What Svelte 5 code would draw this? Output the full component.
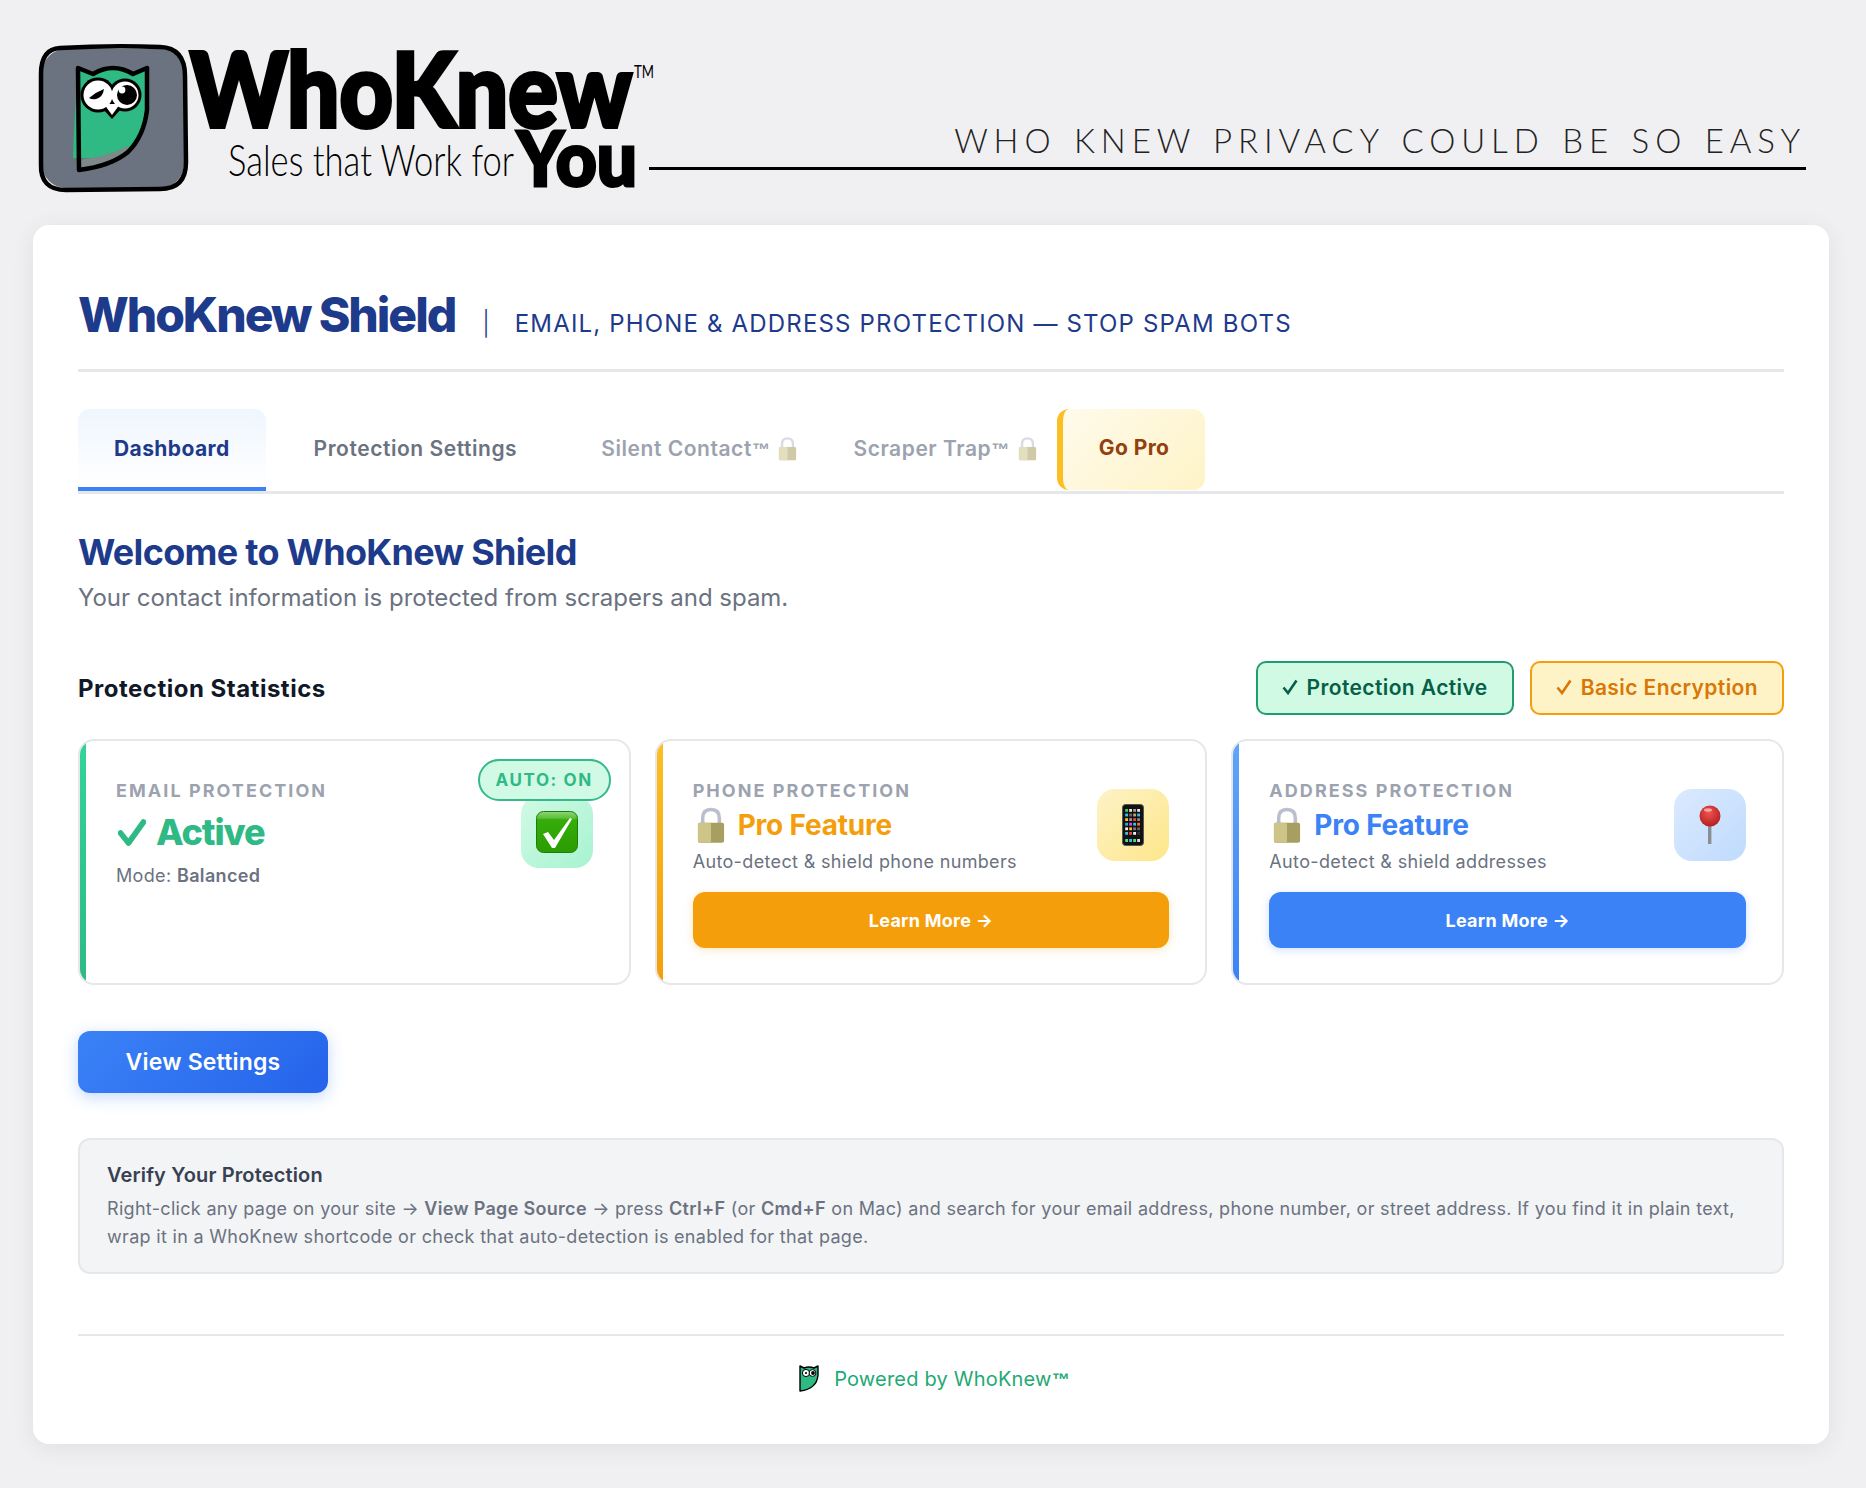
<script>
  const phoneCols = ['#3ecf5a','#e8e8e8','#9aa0a6','#e8e8e8','#38bdf8','#666','#c9a45c','#38bdf8','#fbbf24','#999','#ef4444','#888','#22b8cf','#d946ef','#38bdf8','#f97316','#eee','#fbbf24','#777','#666','#38bdf8','#ef4444','#eee','#333'];
</script>

{#snippet lock(size)}
  <svg class="emoji" width={size} height={size} viewBox="0 0 32 32" aria-hidden="true">
    <path d="M9 15 V10 Q9 3 16 3 Q23 3 23 10 V15" fill="none" stroke="#b9bfcc" stroke-width="3" />
    <rect x="5" y="14" width="22" height="17" rx="1.5" fill="#a89e62" />
    <rect x="5" y="14" width="11" height="17" rx="1.5" fill="#cdc488" />
  </svg>
{/snippet}

{#snippet tick()}
  <svg class="tick" width="16" height="16" viewBox="0 0 16 16" aria-hidden="true">
    <path d="M1.5 8.5 L6 14 L14.5 1.5" fill="none" stroke="currentColor" stroke-width="2.6" />
  </svg>
{/snippet}

<div class="page">
  <header class="brand">
    <svg class="logo" width="620" height="190" viewBox="38 10 620 190" role="img" aria-label="WhoKnew logo">
      <rect x="42" y="49" width="142" height="139" rx="24" fill="#6b7280" />
      <path d="M60 48 Q112 45 160 47 Q185 48 185 76 L186 162 Q186 189 160 189 L66 190 Q40 190 41 164 L41 74 Q41 49 60 48 Z" fill="none" stroke="#000" stroke-width="4.5" />
      <path d="M78 70 L93 74 Q103 68 113 68 Q123 68 133 74 L146 69 L146 110 Q144 134 128 150 Q108 160 73 158 Q74 120 78 70 Z" fill="#2fba84" />
      <path d="M128 146 Q108 156 80 160 L80 168 Q112 166 130 150 Z" fill="#7d8a89" />
      <path d="M78 68 L93 74 Q103 68 113 68 Q123 68 133 74 L147 68 L147 110 Q144 136 128 152 Q111 166 79 170 Z" fill="none" stroke="#000" stroke-width="4.5" stroke-linejoin="round" />
      <circle cx="98" cy="95" r="17.5" fill="#000" />
      <circle cx="125" cy="95" r="16.5" fill="#000" />
      <path d="M102 108 L112 119 L122 108 Z" fill="#000" />
      <circle cx="98" cy="95" r="14.5" fill="#fff" />
      <circle cx="125" cy="95" r="13.5" fill="#fff" />
      <path d="M104 104 L112 115 L120 104 Z" fill="#fff" />
      <circle cx="127" cy="95" r="10" fill="#000" />
      <circle cx="122" cy="90" r="3.4" fill="#fff" />
      <path d="M89 98 Q96 92 104 89 Q103 97 96 99 Q92 100 89 98 Z" fill="#000" />
      <text class="lg-big" x="190" y="127" textLength="442" lengthAdjust="spacingAndGlyphs">WhoKnew</text>
      <text class="lg-tm" x="634" y="78" textLength="20" lengthAdjust="spacingAndGlyphs">TM</text>
      <text class="lg-sales" x="228" y="176" textLength="286" lengthAdjust="spacingAndGlyphs">Sales that Work for</text>
      <text class="lg-you" x="517" y="186" textLength="120" lengthAdjust="spacingAndGlyphs">You</text>
    </svg>
    <div class="tagline">WHO KNEW PRIVACY COULD BE SO EASY</div>
  </header>

  <main class="panel">
    <div class="titlebar">
      <h1>WhoKnew Shield</h1>
      <span class="sep">|</span>
      <span class="subtitle">EMAIL, PHONE &amp; ADDRESS PROTECTION — STOP SPAM BOTS</span>
    </div>

    <nav class="tabs">
      <div class="tab current">Dashboard</div>
      <div class="tab">Protection Settings</div>
      <div class="tab locked"><span>Silent Contact<span class="tm">™</span></span><span class="tablock">{@render lock(25)}</span></div>
      <div class="tab locked"><span>Scraper Trap<span class="tm">™</span></span><span class="tablock">{@render lock(25)}</span></div>
      <div class="tab gopro">Go Pro</div>
    </nav>

    <h2>Welcome to WhoKnew Shield</h2>
    <p class="lead">Your contact information is protected from scrapers and spam.</p>

    <div class="statshead">
      <h3>Protection Statistics</h3>
      <div class="badges">
        <span class="badge green">{@render tick()} Protection Active</span>
        <span class="badge amber">{@render tick()} Basic Encryption</span>
      </div>
    </div>

    <div class="cards">
      <section class="card c-green">
        <span class="auto">AUTO: ON</span>
        <div class="cardrow first">
          <div class="info">
            <div class="label">EMAIL PROTECTION</div>
            <div class="status">
              <svg class="bigcheck" width="28" height="27" viewBox="0 0 28 27" aria-hidden="true">
                <path d="M2.5 14 L10.5 24 L25.5 3" fill="none" stroke="currentColor" stroke-width="5.6" stroke-linejoin="round" stroke-linecap="round" />
              </svg>
              Active
            </div>
            <div class="sub mode">Mode: <b>Balanced</b></div>
          </div>
          <div class="iconbox ib-green">
            <svg width="42" height="42" viewBox="0 0 42 42" aria-hidden="true">
              <defs><linearGradient id="gchk" x1="0" y1="0" x2="0" y2="1"><stop offset="0" stop-color="#8fd57a" /><stop offset=".16" stop-color="#5cc03a" /><stop offset=".2" stop-color="#36ad0a" /><stop offset="1" stop-color="#2a9c02" /></linearGradient></defs>
              <rect x=".5" y=".5" width="41" height="41" rx="7" fill="url(#gchk)" stroke="#1f7c0a" />
              <path d="M7 23 L12 21 L18 29 L34 7 L36 8 L19 37 L16 37 Z" fill="#fff" />
            </svg>
          </div>
        </div>
      </section>

      <section class="card c-amber">
        <div class="cardrow">
          <div class="info">
            <div class="label">PHONE PROTECTION</div>
            <div class="pro amber-t">{@render lock(38)}<span>Pro Feature</span></div>
            <div class="sub">Auto-detect &amp; shield phone numbers</div>
          </div>
          <div class="iconbox ib-amber">
            <svg width="22" height="42" viewBox="0 0 22 42" aria-hidden="true">
              <rect x=".5" y=".5" width="21" height="41" rx="3" fill="#111" stroke="#555" />
              {#each [0,1,2,3,4,5] as r}
                {#each [0,1,2,3] as c}
                  <rect x={3.2 + c*4} y={5 + r*4.6} width="2.8" height="2.8" fill={phoneCols[r*4+c]} />
                {/each}
              {/each}
              {#each [0,1,2,3] as c}
                <rect x={3.2 + c*4} y="35" width="2.8" height="3" fill={['#4ade80','#38bdf8','#4ade80','#ddd'][c]} />
              {/each}
            </svg>
          </div>
        </div>
        <button class="learn l-amber">Learn More →</button>
      </section>

      <section class="card c-blue">
        <div class="cardrow">
          <div class="info">
            <div class="label">ADDRESS PROTECTION</div>
            <div class="pro blue-t">{@render lock(38)}<span>Pro Feature</span></div>
            <div class="sub">Auto-detect &amp; shield addresses</div>
          </div>
          <div class="iconbox ib-blue">
            <svg width="24" height="40" viewBox="0 0 24 40" aria-hidden="true">
              <defs><radialGradient id="pinr" cx=".45" cy=".35" r=".7"><stop offset="0" stop-color="#ef5350" /><stop offset="1" stop-color="#b01c1c" /></radialGradient></defs>
              <rect x="10" y="20" width="3.4" height="19" fill="#8a8d93" />
              <circle cx="12" cy="11" r="10.5" fill="url(#pinr)" />
              <ellipse cx="10" cy="5" rx="4" ry="1.8" fill="#f7a3a0" />
            </svg>
          </div>
        </div>
        <button class="learn l-blue">Learn More →</button>
      </section>
    </div>

    <button class="primary">View Settings</button>

    <div class="verify">
      <div class="vtitle">Verify Your Protection</div>
      <p>Right-click any page on your site → <b>View Page Source</b> → press <b>Ctrl+F</b> (or <b>Cmd+F</b> on Mac) and search for your email address, phone number, or street address. If you find it in plain text, wrap it in a WhoKnew shortcode or check that auto-detection is enabled for that page.</p>
    </div>

    <footer class="foot">
      <svg width="20" height="27" viewBox="0 0 20 27" aria-hidden="true">
        <path d="M1 1 L5 3 Q10 1 15 3 L19 1 L19 10 Q18 24 1 26 Z" fill="#2fba84" stroke="#000" stroke-width="1.4" stroke-linejoin="round" />
        <circle cx="7" cy="8" r="3.6" fill="#fff" stroke="#000" />
        <circle cx="13.5" cy="8" r="3.4" fill="#fff" stroke="#000" />
        <circle cx="14" cy="8" r="1.9" fill="#000" /><circle cx="7" cy="8" r="1.1" fill="#000" />
      </svg>
      <span>Powered by WhoKnew<span class="tm">™</span></span>
    </footer>
  </main>
</div>

<style>
  :global(body) {
    margin: 0;
    background: #f0f0f2;
    font-family: Inter, "Noto Sans", "Liberation Sans", sans-serif;
  }
  .page { width: 1866px; height: 1488px; box-sizing: border-box; padding: 10px 37px 0 33px; }
  .brand { display: flex; align-items: flex-start; height: 215px; position: relative; }
  .logo { flex: none; margin-left: 5px; display: block; overflow: visible; }
  .lg-big { font-family: Lato, "Open Sans", sans-serif; font-weight: 900; font-size: 103px; fill: #000; stroke: #000; stroke-width: 4px; }
  .lg-you { font-family: Lato, "Open Sans", sans-serif; font-weight: 900; font-size: 76px; fill: #000; stroke: #000; stroke-width: 3px; }
  .lg-sales { font-family: Lato, sans-serif; font-weight: 300; font-size: 44px; fill: #000; }
  .lg-tm { font-family: Lato, sans-serif; font-weight: 400; font-size: 18px; fill: #000; }
  .tagline {
    position: absolute; left: 616px; right: 23px; top: 112px; height: 48px; box-sizing: border-box;
    border-bottom: 3px solid #000; text-align: right; white-space: nowrap;
    font-family: Lato, sans-serif; font-weight: 300; font-size: 33px; letter-spacing: 5.9px; word-spacing: 2.7px; line-height: 37px; color: #222;
  }
  .panel {
    box-sizing: border-box; height: 1219px; background: #fff; border-radius: 16px;
    box-shadow: 0 4px 24px rgba(0,0,0,.07); padding: 46px 45px 0;
  }
  .titlebar { display: flex; align-items: baseline; height: 89px; padding-top: 9px; border-bottom: 3px solid #e5e7eb; }
  h1 { margin: 0; font-size: 48px; line-height: 70px; font-weight: 800; letter-spacing: -2.05px; color: #1e3a8a; }
  .sep { margin-left: 27px; font-size: 24px; font-weight: 300; color: #1e3a8a; }
  .subtitle { margin-left: 25px; font-size: 24px; letter-spacing: 1.17px; color: #1e3a8a; }

  .tabs { display: flex; gap: 12px; margin-top: 37px; border-bottom: 3px solid #e5e7eb; height: 82px; }
  .tab {
    box-sizing: border-box; height: 82px; padding: 0 36px 4px; display: flex; align-items: center;
    font-size: 21px; font-weight: 600; letter-spacing: .55px; color: #6b7280; white-space: nowrap;
  }
  .tm { font-family: "Liberation Sans", sans-serif; font-size: 18px; font-weight: 700; }
  .tab.current { padding-bottom: 0; font-weight: 700; letter-spacing: .4px; color: #1e3a8a; border-radius: 12px 12px 0 0; border-bottom: 4px solid #3b82f6; background: linear-gradient(180deg, #eff6ff, #fff); }
  .tab.locked { color: #9ca3af; padding-right: 5px; }
  .tablock { opacity: .55; margin-left: 5px; display: flex; }
  .tab.gopro { height: 81px; font-weight: 700; letter-spacing: .4px; color: #92400e; border-left: 6px solid #fbbf24; border-radius: 12px; background: linear-gradient(135deg, #fffbeb, #fef3c7); }

  h2 { margin: 34px 0 0; font-size: 36px; line-height: 48px; font-weight: 700; letter-spacing: -.7px; color: #1e3a8a; }
  .lead { margin: 4px 0 0; font-size: 24px; line-height: 36px; letter-spacing: -.02px; color: #6b7280; }

  .statshead { display: flex; justify-content: space-between; align-items: center; margin-top: 45px; }
  h3 { margin: 0; font-size: 24px; font-weight: 700; letter-spacing: .5px; color: #111827; }
  .badges { display: flex; gap: 16px; }
  .badge { box-sizing: border-box; height: 54px; padding: 0 24px 2px; display: flex; align-items: center; gap: 9px; border-radius: 10px; border: 2px solid; font-size: 21px; font-weight: 600; letter-spacing: .4px; white-space: nowrap; }
  .tick { flex: none; display: block; }
  .green { background: #d1fae5; border-color: #1f9d6f; color: #065f46; }
  .amber { background: #fef3c7; border-color: #f59e0b; color: #d97706; }

  .cards { display: grid; grid-template-columns: repeat(3, 1fr); gap: 24px; margin-top: 24px; }
  .card { position: relative; box-sizing: border-box; height: 246px; overflow: hidden; background: #fff; border: 2px solid #e5e7eb; border-radius: 16px; padding: 38px 36px 0; }
  .card::before { content: ""; position: absolute; left: 0; top: 0; bottom: 0; width: 6px; }
  .c-green::before { background: linear-gradient(180deg, #34d399, #2fb985); }
  .c-amber::before { background: linear-gradient(180deg, #fbbf24, #f59e0b); }
  .c-blue::before { background: linear-gradient(180deg, #60a5fa, #3b82f6); }
  .auto { position: absolute; z-index: 1; top: 18px; right: 18px; box-sizing: border-box; height: 42px; width: 133px; display: flex; align-items: center; justify-content: center; border: 2px solid #34b98a; border-radius: 21px; background: #d1fae5; color: #2fb985; font-size: 17px; font-weight: 700; letter-spacing: 1.6px; }
  .cardrow { display: flex; justify-content: space-between; align-items: center; }
  .cardrow.first { align-items: flex-start; }
  .cardrow .iconbox { margin-bottom: 6px; }
  .first .iconbox { margin: 17px 0 0; }
  .info { min-width: 0; }
  .label { font-size: 18px; line-height: 24px; font-weight: 700; letter-spacing: 2.05px; color: #9ca3af; }
  .status { margin-top: 6px; display: flex; align-items: center; gap: 10px; font-size: 36px; line-height: 46px; font-weight: 800; letter-spacing: -1.1px; color: #2fb985; }
  .bigcheck { flex: none; display: block; margin-left: 2px; }
  .sub { margin-top: 5px; font-size: 18px; line-height: 28px; letter-spacing: .35px; color: #6b7280; white-space: nowrap; }
  .mode { margin-top: 7px; }
  .sub b { font-weight: 600; }
  .pro { display: flex; align-items: center; gap: 8px; height: 36px; margin-top: 4px; font-size: 28px; font-weight: 700; letter-spacing: -.2px; }
  .amber-t { color: #f59e0b; }
  .blue-t { color: #3b82f6; }
  .pro .emoji { margin-left: -1px; }
  .emoji { flex: none; display: block; }
  .iconbox { flex: none; width: 72px; height: 72px; border-radius: 18px; display: flex; align-items: center; justify-content: center; }
  .ib-green { background: linear-gradient(135deg, #d1fae5, #a7f3d0); }
  .ib-amber { background: linear-gradient(135deg, #fef3c7, #fde68a); }
  .ib-blue { background: linear-gradient(135deg, #dbeafe, #bfdbfe); }
  .learn { display: block; width: 100%; height: 56px; margin-top: 16px; border: 0; border-radius: 12px; color: #fff; font: 700 18px Inter, sans-serif; letter-spacing: .25px; }
  .l-amber { background: #f59e0b; box-shadow: 0 2px 8px rgba(245,158,11,.25); }
  .l-blue { background: #3b82f6; box-shadow: 0 2px 8px rgba(59,130,246,.25); }

  .primary { display: block; margin-top: 46px; width: 250px; height: 62px; border: 0; border-radius: 12px; background: linear-gradient(135deg, #3b82f6, #2563eb); box-shadow: 0 4px 16px rgba(59,130,246,.3); color: #fff; font: 600 23px Inter, sans-serif; letter-spacing: .2px; }

  .verify { box-sizing: border-box; height: 136px; margin-top: 45px; padding: 21px 27px 0; background: #f3f4f6; border: 2px solid #e5e7eb; border-radius: 12px; }
  .vtitle { font-size: 20px; line-height: 28px; font-weight: 600; letter-spacing: .15px; color: #374151; }
  .verify p { margin: 6px 0 0; font-size: 18px; line-height: 27.6px; letter-spacing: .31px; color: #6b7280; }
  .verify b { font-weight: 600; }

  .foot { margin-top: 60px; border-top: 2px solid #e5e7eb; display: flex; justify-content: center; align-items: center; gap: 15px; padding: 29px 0 0 7px; font-size: 20px; letter-spacing: .2px; color: #1fa974; }
</style>
